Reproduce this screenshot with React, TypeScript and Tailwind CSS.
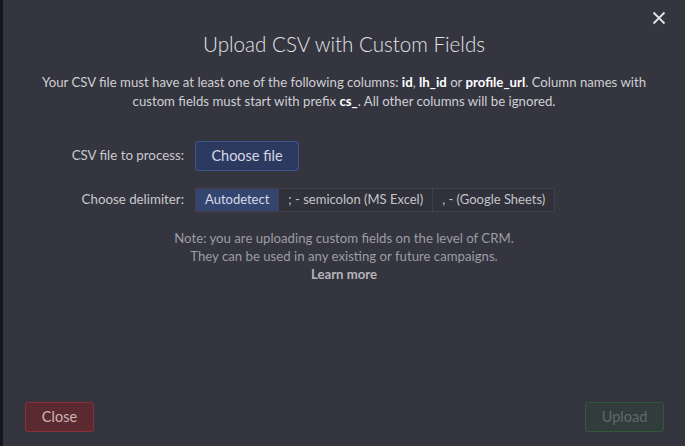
import React, { useState } from "react";

const delimiters = [
  { id: "auto", label: "Autodetect" },
  { id: "semi", label: "; - semicolon (MS Excel)" },
  { id: "comma", label: ", - (Google Sheets)" },
];

const App: React.FC = () => {
  const [delimiter, setDelimiter] = useState("auto");

  return (
    <div
      className="flex h-[446px] w-[685px] overflow-hidden bg-[#15161b]"
      style={{ fontFamily: "Lato, 'Open Sans', sans-serif" }}
    >
      {/* backdrop strip */}
      <div className="w-[3px] shrink-0 bg-[#15161b]" />

      <div className="relative flex flex-1 flex-col bg-[#34353f] px-[21px] pb-[14px]">
        <button className="absolute right-[19px] top-[11px] text-[#e4e4e8]">
          <svg width="14" height="14" viewBox="0 0 14 14" fill="none">
            <path d="M1.5 1.5 L12.5 12.5 M12.5 1.5 L1.5 12.5" stroke="currentColor" strokeWidth="1.8" />
          </svg>
        </button>

        <h2 className="mt-[30px] text-center text-[20.6px] font-light leading-[28px] text-[#e2e2e6]">
          Upload CSV with Custom Fields
        </h2>

        <p className="mt-[15px] text-center text-[13.2px] leading-[19px] text-[#cfcfd4]">
          Your CSV file must have at least one of the following columns:{" "}
          <b className="text-white">id</b>, <b className="text-white">lh_id</b> or{" "}
          <b className="text-white">profile_url</b>. Column names with
          <br />
          custom fields must start with prefix <b className="text-white">cs_</b>. All other columns will be
          ignored.
        </p>

        <div className="mt-[30px] grid grid-cols-[160px_1fr] items-center gap-x-[11px] gap-y-[17px] text-[13.3px] text-[#c9c9ce]">
          <div className="text-right">CSV file to process:</div>
          <div>
            <button className="h-[30px] w-[104px] rounded-[3px] border border-[#3c5694] bg-[#2c3a60] text-[14.5px] text-[#d4d8e4]">
              Choose file
            </button>
          </div>

          <div className="text-right">Choose delimiter:</div>
          <div className="flex">
            <div className="flex h-[24px] border border-[#3f404b] bg-[#30313a]">
              {delimiters.map((d, i) => (
                <button
                  key={d.id}
                  onClick={() => setDelimiter(d.id)}
                  className={`px-[9px] text-[13px] ${i > 0 ? "border-l border-[#3f404b]" : ""} ${
                    delimiter === d.id ? "bg-[#34466f] text-[#d6dae6]" : "text-[#c4c4ca]"
                  }`}
                >
                  {d.label}
                </button>
              ))}
            </div>
          </div>
        </div>

        <div className="mt-[17px] text-center text-[13.2px] leading-[18px] text-[#9c9ca4]">
          Note: you are uploading custom fields on the level of CRM.
          <br />
          They can be used in any existing or future campaigns.
          <br />
          <a className="font-bold text-[#b4b4ba]">Learn more</a>
        </div>

        <div className="mt-auto flex items-center justify-between">
          <button className="ml-[1px] h-[30px] w-[69px] rounded-[3px] border border-[#8b2f37] bg-[#5b2a31] text-[14.5px] text-[#cdb4b6]">
            Close
          </button>
          <button
            disabled
            className="h-[30px] w-[79px] rounded-[3px] border border-[#2d5a3b] bg-[#323c3c] text-[14.5px] text-[#5d6b66]"
          >
            Upload
          </button>
        </div>
      </div>
    </div>
  );
};

export default App;
